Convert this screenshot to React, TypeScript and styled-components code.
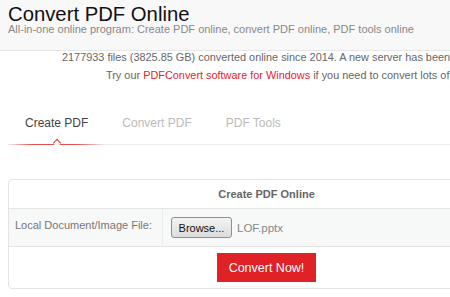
import React from "react";
import styled, { createGlobalStyle } from "styled-components";

const GlobalStyle = createGlobalStyle`
	html, body {
		margin: 0;
		padding: 0;
		background: #fff;
		overflow: hidden;
	}
	body {
		font-family: "Liberation Sans", Arial, sans-serif;
	}
`;

const Page = styled.div`
	width: 1000px;
`;

const Header = styled.header`
	box-sizing: border-box;
	background: #f8f8f8;
	border-bottom: 1px solid #e6e6e6;
	padding: 4px 8px 0 8px;
	height: 51px;
`;

const Title = styled.h1`
	margin: 0;
	font-size: 20.3px;
	font-weight: normal;
	color: #111;
	line-height: 20px;
`;

const Subtitle = styled.p`
	margin: 0;
	font-size: 11px;
	color: #888;
	line-height: 10px;
`;

const Notice = styled.div`
	display: flex;
	flex-direction: column;
	gap: 6px;
	font-size: 10.9px;
	color: #666;
	line-height: 12px;
`;

const NoticeLine = styled.div<{ $indent: number }>`
	white-space: nowrap;
	padding-left: ${(p) => p.$indent}px;
`;

const RedLink = styled.a`
	color: #e8232b;
	text-decoration: none;
`;

const Tabs = styled.nav`
	margin: 34px 0 0 8px;
	display: flex;
	border-bottom: 1px solid #ececec;
`;

const Tab = styled.div<{ $active?: boolean }>`
	position: relative;
	padding: 0 17px 13px 17px;
	font-size: 12px;
	line-height: 16px;
	color: ${(p) => (p.$active ? "#444" : "#bbb")};
`;

const TabMark = styled.span`
	position: absolute;
	left: 0;
	right: 0;
	bottom: -1px;
	height: 1px;
	background: linear-gradient(
		to right,
		rgba(232, 60, 60, 0) 0%,
		rgba(232, 60, 60, 0.9) 25%,
		rgba(232, 60, 60, 0.9) 70%,
		rgba(232, 60, 60, 0) 100%
	);
	&::after {
		content: "";
		position: absolute;
		left: 46px;
		bottom: 0;
		width: 5px;
		height: 5px;
		border-left: 1px solid #e83c3c;
		border-top: 1px solid #e83c3c;
		background: #fff;
		transform: translateY(1px) rotate(45deg);
		transform-origin: center;
	}
`;

const Card = styled.section`
	margin: 34px 0 0 8px;
	width: 515px;
	border: 1px solid #e3e3e3;
	border-radius: 4px;
	font-size: 11px;
	color: #777;
`;

const CardHead = styled.div`
	text-align: center;
	font-weight: bold;
	color: #666;
	line-height: 28px;
	border-bottom: 1px solid #e6e6e6;
`;

const FileRow = styled.div`
	display: grid;
	grid-template-columns: 154px 1fr;
	background: #f7f8f8;
	border-bottom: 1px solid #e3e3e3;
	height: 37px;
`;

const Label = styled.div`
	padding: 10px 0 0 6px;
	border-right: 1px solid #ececec;
`;

const FileCell = styled.div`
	display: flex;
	align-items: center;
	gap: 5px;
	padding-left: 8px;
`;

const BrowseButton = styled.button`
	font-family: inherit;
	font-size: 11px;
	color: #111;
	width: 61px;
	height: 21px;
	padding: 0;
	border: 1px solid #8f8f8f;
	border-radius: 3px;
	background: linear-gradient(#f4f4f4, #dcdcdc);
`;

const FileName = styled.span`
	color: #888;
	font-size: 11.5px;
`;

const Actions = styled.div`
	display: flex;
	justify-content: center;
	padding: 6px 0;
`;

const ConvertButton = styled.button`
	font-family: inherit;
	font-size: 12.5px;
	color: #fff;
	background: #e02227;
	border: none;
	width: 99px;
	height: 29px;
	padding: 0;
`;

const App: React.FC = () => {
	return (
		<Page>
			<GlobalStyle />
			<Header>
				<Title>Convert PDF Online</Title>
				<Subtitle>
					All-in-one online program: Create PDF online, convert PDF online, PDF
					tools online
				</Subtitle>
			</Header>
			<Notice>
				<NoticeLine $indent={62}>
					2177933 files (3825.85 GB) converted online since 2014. A new server
					has been added.
				</NoticeLine>
				<NoticeLine $indent={106}>
					Try our <RedLink href="#">PDFConvert software for Windows</RedLink> if
					you need to convert lots of <RedLink href="#">PDF files</RedLink>.
				</NoticeLine>
			</Notice>
			<Tabs>
				<Tab $active>
					Create PDF
					<TabMark />
				</Tab>
				<Tab>Convert PDF</Tab>
				<Tab>PDF Tools</Tab>
			</Tabs>
			<Card>
				<CardHead>Create PDF Online</CardHead>
				<FileRow>
					<Label>Local Document/Image File:</Label>
					<FileCell>
						<BrowseButton>Browse...</BrowseButton>
						<FileName>LOF.pptx</FileName>
					</FileCell>
				</FileRow>
				<Actions>
					<ConvertButton>Convert Now!</ConvertButton>
				</Actions>
			</Card>
		</Page>
	);
};

export default App;
